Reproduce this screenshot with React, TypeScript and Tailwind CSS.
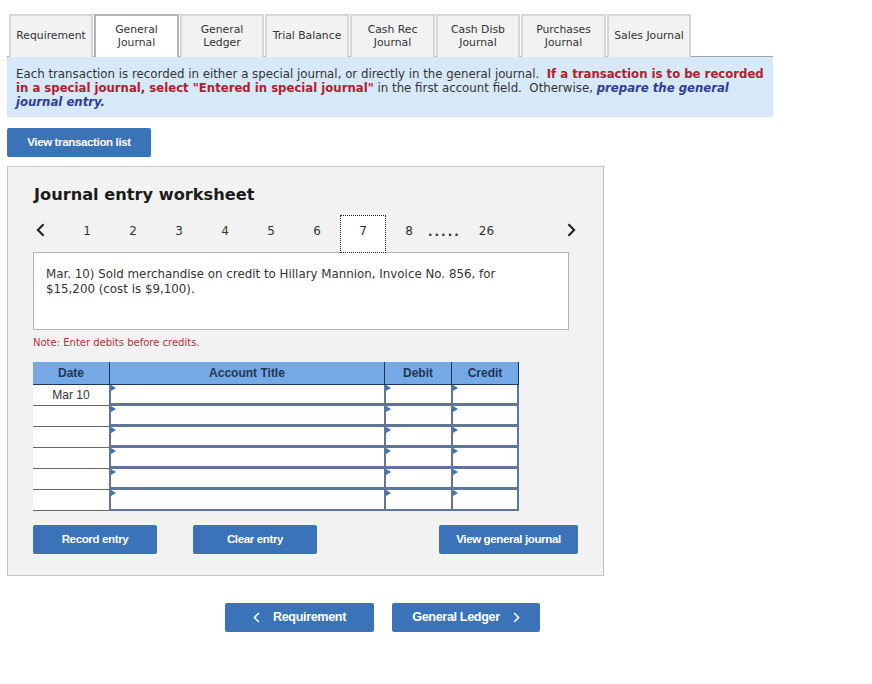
const tabs = [
  { label: ["Requirement"], width: "w-[84px]" },
  { label: ["General", "Journal"], width: "w-[85px]", active: true },
  { label: ["General", "Ledger"], width: "w-[84px]" },
  { label: ["Trial Balance"], width: "w-[84px]" },
  { label: ["Cash Rec", "Journal"], width: "w-[85px]" },
  { label: ["Cash Disb", "Journal"], width: "w-[84px]" },
  { label: ["Purchases", "Journal"], width: "w-[85px]" },
  { label: ["Sales Journal"], width: "w-[84px]" },
]

const pages = ["1", "2", "3", "4", "5", "6", "7", "8"]

function Chevron({ dir, className }: { dir: "left" | "right"; className: string }) {
  return (
    <svg viewBox="0 0 10 16" className={className} fill="none" stroke="currentColor" strokeWidth="2.4">
      <path d={dir === "left" ? "M8.5 1.5 2 8l6.5 6.5" : "M1.5 1.5 8 8l-6.5 6.5"} />
    </svg>
  )
}

function BlueButton({ className, children }: { className: string; children: React.ReactNode }) {
  return (
    <button
      className={
        "flex items-center justify-center rounded-[2px] bg-[#3a73b7] font-['Liberation_Sans',sans-serif] font-bold tracking-[-0.35px] text-white " +
        className
      }
    >
      {children}
    </button>
  )
}

function EntryCell({ width, last }: { width: string; last: boolean }) {
  return (
    <div
      className={
        "relative h-[21px] border-l-[2px] border-[#5f7698] bg-white " +
        (last ? "border-b-[2px] " : "border-b-[3px] ") +
        width
      }
    >
      <span className="absolute left-0 top-0 h-0 w-0 border-y-[3px] border-l-[5px] border-y-transparent border-l-[#3f72b5]" />
    </div>
  )
}

export default function App() {
  return (
    <div className="h-[684px] w-[872px] bg-white pl-[7px] pt-[14px] font-['DejaVu_Sans','Verdana',sans-serif] text-[#333]">
      {/* Tabs */}
      <div className="flex w-[766px] gap-[1px] border-b border-[#9aa5ad] pl-[2px]">
        {tabs.map((tab) => (
          <div
            key={tab.label.join(" ")}
            className={
              "-mb-px flex h-[43px] flex-col items-center justify-center border-2 border-b-0 pb-[2px] text-[10.8px] leading-[13px] " +
              tab.width +
              (tab.active ? " border-[#b4b4b4] bg-white" : " border-[#d6d6d6] bg-[#f2f2f2]")
            }
          >
            {tab.label.map((line) => (
              <span key={line}>{line}</span>
            ))}
          </div>
        ))}
      </div>

      {/* Instructions */}
      <div className="h-[60px] w-[766px] bg-[#d7e9f8] pl-[9px] pt-[10px] text-[11.8px] leading-[14px]">
        Each transaction is recorded in either a special journal, or directly in the general journal.&nbsp;{" "}
        <b className="text-[11.7px] text-[#b0202c]">
          If a transaction is to be recorded in a special journal, select "Entered in special journal"
        </b>{" "}
        in the first account field.&nbsp; Otherwise,{" "}
        <b className="text-[11.7px] italic text-[#2e3d94]">prepare the general journal entry.</b>
      </div>

      <BlueButton className="mt-[11px] h-[29px] w-[144px] text-[11.5px]">View transaction list</BlueButton>

      {/* Worksheet */}
      <div className="mt-[9px] h-[410px] w-[597px] border border-[#c4c4c4] bg-[#f2f2f2] pl-[25px] pt-[17px]">
        <h2 className="pl-px text-[16.2px] font-bold leading-[22px] text-[#1a1a1a]">Journal entry worksheet</h2>

        <div className="mt-[9px] flex h-[38px] w-[543px] items-start text-[12px]">
          <Chevron dir="left" className="ml-[3px] mt-[8px] h-[14px] w-[9px] text-[#222]" />
          <div className="ml-[19px] flex">
            {pages.map((page) => (
              <span
                key={page}
                className={
                  page === "7"
                    ? "relative z-10 flex h-[38px] w-[46px] items-center justify-center border border-dotted border-[#223] bg-white pb-[7px]"
                    : "flex h-[38px] w-[46px] items-center justify-center pb-[7px]"
                }
              >
                {page}
              </span>
            ))}
          </div>
          <span className="-ml-[4px] mt-[8px] font-bold tracking-[2px]">.....</span>
          <span className="ml-[18px] mt-[7px]">26</span>
          <Chevron dir="right" className="ml-auto mt-[8px] h-[14px] w-[9px] text-[#222]" />
        </div>

        <div className="-mt-px h-[78px] w-[536px] border border-[#b4b4b4] bg-white pl-[12px] pr-[12px] pt-[14px] text-[11.85px] leading-[15px]">
          Mar. 10) Sold merchandise on credit to Hillary Mannion, Invoice No. 856, for
          <br />
          $15,200 (cost is $9,100).
        </div>

        <p className="mt-[6px] text-[10px] leading-[13px] text-[#b0343c]">Note: Enter debits before credits.</p>

        {/* Table */}
        <div className="mt-[13px] w-[486px] font-['Liberation_Sans',sans-serif] text-[12px]">
          <div className="flex h-[23px] border-b border-[#1d3557] bg-[#75a9e5] text-center font-bold leading-[22px] text-[#1f3656]">
            <span className="w-[77px] border-r border-[#1d3557]">Date</span>
            <span className="w-[275px] border-r border-[#1d3557]">Account Title</span>
            <span className="w-[67px] border-r border-[#1d3557]">Debit</span>
            <span className="w-[67px] border-r border-[#1d3557]">Credit</span>
          </div>
          {[0, 1, 2, 3, 4, 5].map((row) => (
            <div key={row} className="flex">
              <div className="h-[21px] w-[76px] border-b border-[#666] bg-white text-center leading-[20px]">
                {row === 0 ? "Mar 10" : ""}
              </div>
              <EntryCell width="w-[275px]" last={row === 5} />
              <EntryCell width="w-[67px]" last={row === 5} />
              <div className="w-[68px] border-r-[2px] border-[#5f7698]">
                <EntryCell width="w-full" last={row === 5} />
              </div>
            </div>
          ))}
        </div>

        <div className="mt-[14px] flex">
          <BlueButton className="h-[29px] w-[124px] text-[11.5px]">Record entry</BlueButton>
          <BlueButton className="ml-[36px] h-[29px] w-[124px] text-[11.5px]">Clear entry</BlueButton>
          <BlueButton className="ml-[122px] h-[29px] w-[139px] text-[11.5px]">View general journal</BlueButton>
        </div>
      </div>

      {/* Bottom nav */}
      <div className="ml-[218px] mt-[27px] flex gap-[18px]">
        <BlueButton className="h-[29px] w-[149px] gap-[13px] text-[12.6px]">
          <Chevron dir="left" className="h-[11px] w-[7px]" />
          Requirement
        </BlueButton>
        <BlueButton className="h-[29px] w-[148px] gap-[13px] text-[12.6px]">
          General Ledger
          <Chevron dir="right" className="h-[11px] w-[7px]" />
        </BlueButton>
      </div>
    </div>
  )
}
